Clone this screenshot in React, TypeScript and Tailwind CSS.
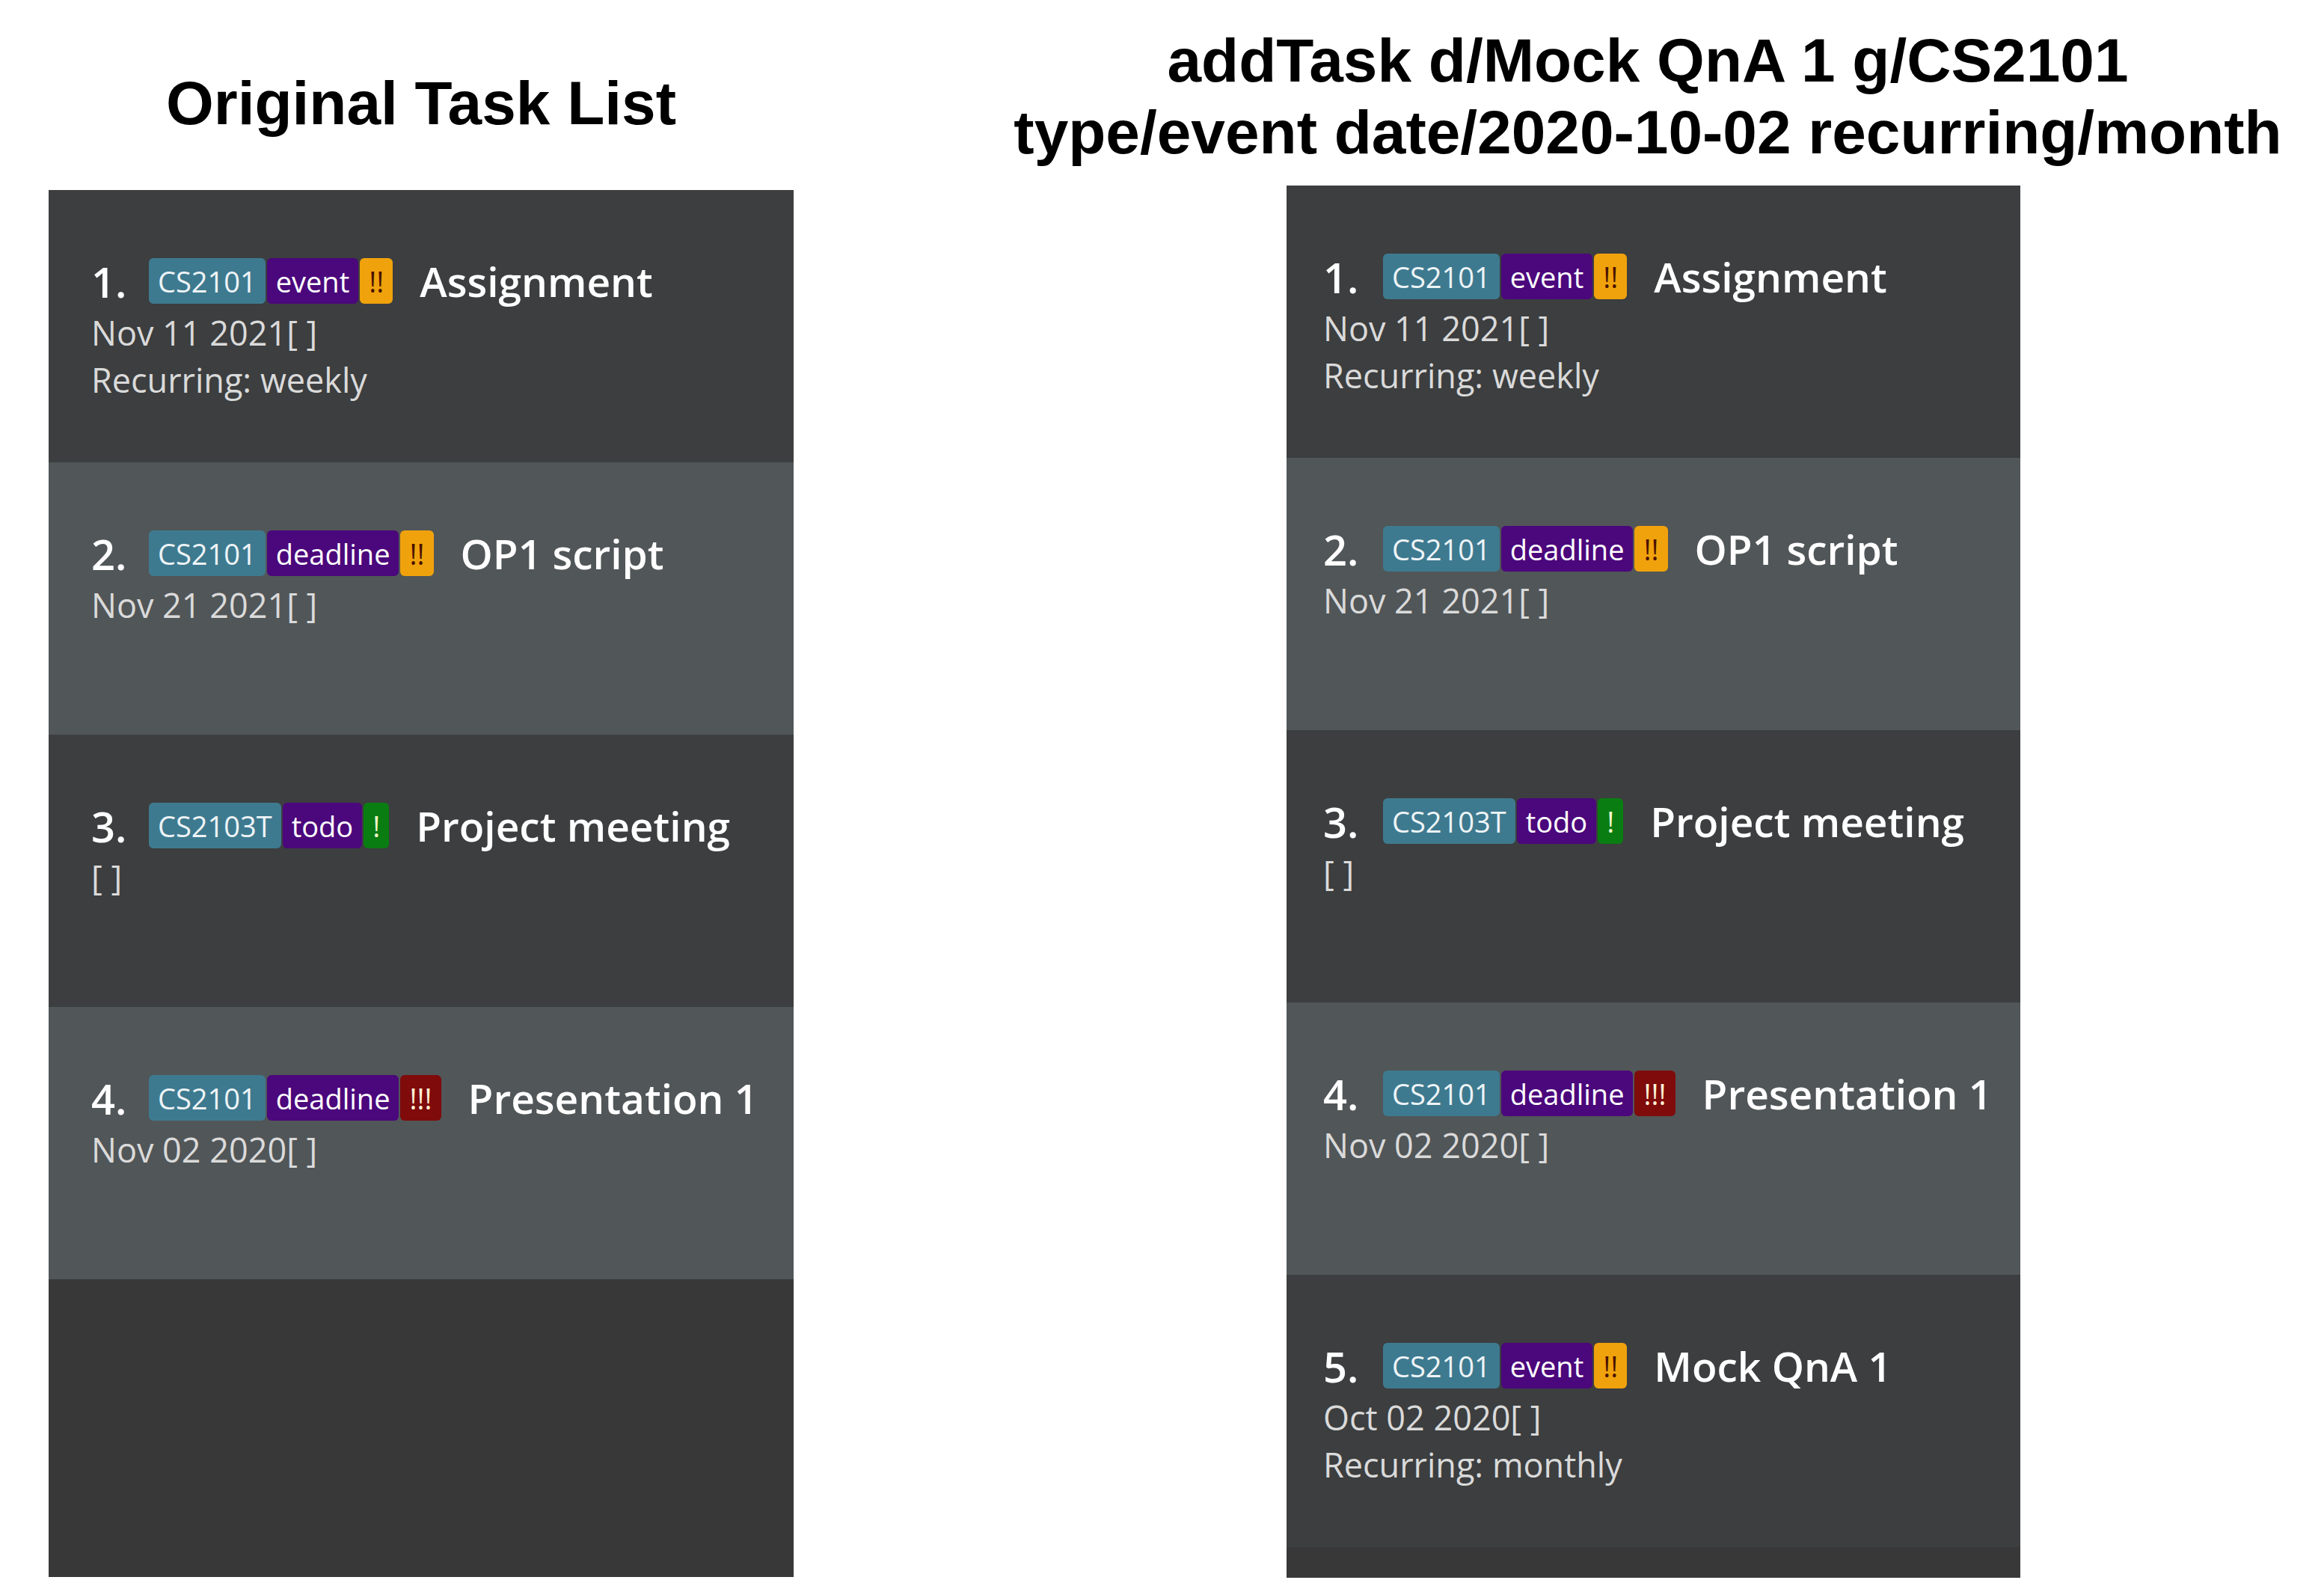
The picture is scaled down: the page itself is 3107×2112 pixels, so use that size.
import React from "react";

type Tag = { label: string; kind: "module" | "type" | "low" | "mid" | "high" };
type Task = { name: string; tags: Tag[]; date: string; recurring?: string };

const tagStyles: Record<Tag["kind"], string> = {
  module: "bg-[#3e7a8f] text-[#eef4f7]",
  type: "bg-[#4b077c] text-white",
  low: "bg-[#0a7d12] text-[#f4f8c8]",
  mid: "bg-[#f0a20c] text-[#4a1200]",
  high: "bg-[#7f0b0b] text-[#fff3d6]",
};

const original: Task[] = [
  {
    name: "Assignment",
    tags: [
      { label: "CS2101", kind: "module" },
      { label: "event", kind: "type" },
      { label: "!!", kind: "mid" },
    ],
    date: "Nov 11 2021[ ]",
    recurring: "Recurring: weekly",
  },
  {
    name: "OP1 script",
    tags: [
      { label: "CS2101", kind: "module" },
      { label: "deadline", kind: "type" },
      { label: "!!", kind: "mid" },
    ],
    date: "Nov 21 2021[ ]",
  },
  {
    name: "Project meeting",
    tags: [
      { label: "CS2103T", kind: "module" },
      { label: "todo", kind: "type" },
      { label: "!", kind: "low" },
    ],
    date: "[ ]",
  },
  {
    name: "Presentation 1",
    tags: [
      { label: "CS2101", kind: "module" },
      { label: "deadline", kind: "type" },
      { label: "!!!", kind: "high" },
    ],
    date: "Nov 02 2020[ ]",
  },
];

const updated: Task[] = [
  ...original,
  {
    name: "Mock QnA 1",
    tags: [
      { label: "CS2101", kind: "module" },
      { label: "event", kind: "type" },
      { label: "!!", kind: "mid" },
    ],
    date: "Oct 02 2020[ ]",
    recurring: "Recurring: monthly",
  },
];

function TaskRow({ index, task, wide }: { index: number; task: Task; wide: boolean }) {
  const rowBg = index % 2 === 1 ? "bg-[#3c3e3f]" : "bg-[#515658]";
  return (
    <div className={`h-[364px] pt-[91px] ${wide ? "pl-[57px]" : "pl-[49px]"} ${rowBg}`}>
      <div className="flex h-[61px] items-center">
        <span className={`${wide ? "w-[77px]" : "w-[80px]"} text-[56px] font-semibold leading-none text-white`}>
          {index}.
        </span>
        <div className="flex gap-[2px]">
          {task.tags.map((t) => (
            <span
              key={t.label}
              className={`flex h-[61px] items-center rounded-[6px] px-[12px] text-[38px] leading-none ${tagStyles[t.kind]}`}
            >
              {t.label}
            </span>
          ))}
        </div>
        <span className="ml-[36px] text-[55px] font-semibold leading-none text-white">{task.name}</span>
      </div>
      <div className="mt-[9px] text-[45px] leading-[60px] text-[#dadada]">{task.date}</div>
      {task.recurring && <div className="mt-[3px] text-[45px] leading-[60px] text-[#dadada]">{task.recurring}</div>}
    </div>
  );
}

function TaskPanel({ tasks, wide }: { tasks: Task[]; wide: boolean }) {
  return (
    <div
      className={`${wide ? "h-[1854px] w-[996px]" : "h-[1861px] w-[981px]"} overflow-hidden bg-[#383838] font-['Open_Sans',sans-serif]`}
    >
      {tasks.map((t, i) => (
        <TaskRow key={i} index={i + 1} task={t} wide={wide} />
      ))}
    </div>
  );
}

export default function App() {
  return (
    <div className="flex h-[2112px] w-[3107px] overflow-hidden bg-white">
      <div className="ml-[65px] flex flex-col">
        <div className="h-[254px] pt-[90px] text-center font-['Liberation_Sans',Arial,sans-serif] text-[82px] font-bold leading-[96px] text-black">
          Original Task List
        </div>
        <TaskPanel tasks={original} wide={true} />
      </div>
      <div className="ml-[239px] flex w-[1806px] flex-col">
        <div className="h-[248px] pt-[33px] text-center font-['Liberation_Sans',Arial,sans-serif] text-[82px] font-bold leading-[96px] text-black">
          <div>addTask d/Mock QnA 1 g/CS2101</div>
          <div>type/event date/2020-10-02 recurring/month</div>
        </div>
        <div className="ml-[420px]">
          <TaskPanel tasks={updated} wide={false} />
        </div>
      </div>
    </div>
  );
}
